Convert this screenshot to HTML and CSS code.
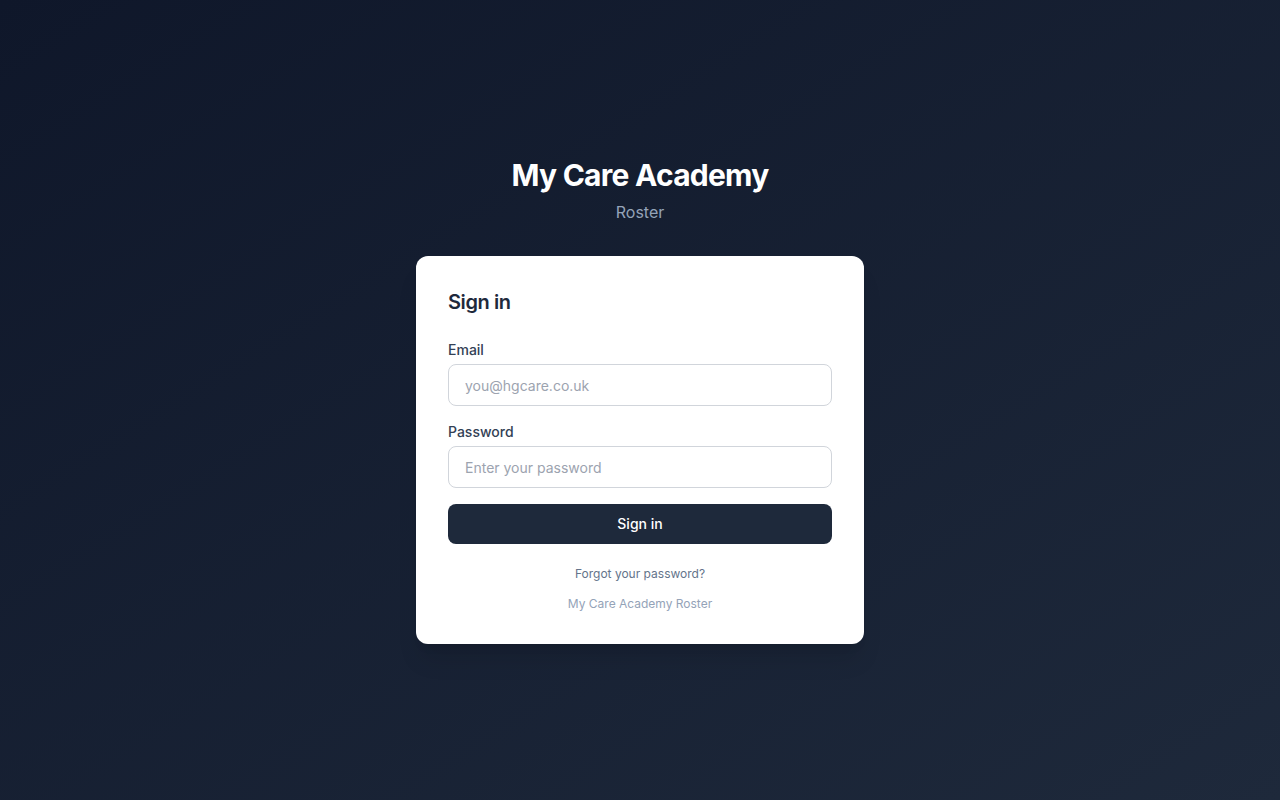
FILE: index.html
```html
<!DOCTYPE html>
<html lang="en">
<head>
<meta charset="utf-8">
<title>My Care Academy Roster - Sign in</title>
<link rel="stylesheet" href="styles.css">
</head>
<body>
<main class="page">
  <div class="wrap">
    <header class="brand">
      <h1 class="brand-title">My Care Academy</h1>
      <p class="brand-sub">Roster</p>
    </header>
    <section class="card">
      <h2 class="card-title">Sign in</h2>
      <form class="form">
        <div class="field">
          <label class="label" for="email">Email</label>
          <input class="input" id="email" type="email" placeholder="you@hgcare.co.uk">
        </div>
        <div class="field">
          <label class="label" for="password">Password</label>
          <input class="input" id="password" type="password" placeholder="Enter your password">
        </div>
        <button class="btn" type="button">Sign in</button>
      </form>
      <div class="forgot"><a class="forgot-link" href="#">Forgot your password?</a></div>
      <p class="footer">My Care Academy Roster</p>
    </section>
  </div>
</main>
</body>
</html>
```
FILE: styles.css
```css
* { box-sizing: border-box; }
html, body { margin: 0; padding: 0; }
body {
  font-family: Inter, "Noto Sans", "Liberation Sans", sans-serif;
  background: linear-gradient(to bottom right, #0f172a, #1e293b);
  min-height: 100vh;
}
.page {
  min-height: 100vh;
  display: flex;
  align-items: center;
  justify-content: center;
  padding: 1px 16px 0;
}
.wrap {
  width: 448px;
}
.brand {
  text-align: center;
  margin-bottom: 32px;
}
.brand-title {
  margin: 0;
  font-size: 30px;
  line-height: 36px;
  font-weight: 700;
  color: #ffffff;
  letter-spacing: -0.75px;
}
.brand-sub {
  margin: 7px 0 0;
  font-size: 16px;
  line-height: 24px;
  color: #94a3b8;
}
.card {
  background: #ffffff;
  border-radius: 12px;
  padding: 32px;
  box-shadow: 0 20px 25px -5px rgba(0,0,0,0.1), 0 8px 10px -6px rgba(0,0,0,0.1);
}
.card-title {
  margin: 0 0 24px;
  font-size: 20px;
  line-height: 28px;
  font-weight: 600;
  color: #1e293b;
  letter-spacing: -0.4px;
}
.form {
  display: flex;
  flex-direction: column;
  gap: 16px;
}
.field {
  display: flex;
  flex-direction: column;
  gap: 4px;
}
.label {
  font-size: 14px;
  line-height: 20px;
  font-weight: 500;
  color: #334155;
}
.input {
  width: 100%;
  height: 42px;
  padding: 10px 16px;
  font-family: inherit;
  font-size: 14px;
  line-height: 20px;
  color: #1e293b;
  border: 1px solid #d1d5db;
  border-radius: 8px;
  background: #fff;
  outline: none;
}
.input::placeholder { color: #9ca3af; }
.btn {
  height: 40px;
  width: 100%;
  border: none;
  border-radius: 8px;
  background: #1e293b;
  color: #ffffff;
  font-family: inherit;
  font-size: 14px;
  line-height: 20px;
  font-weight: 500;
  cursor: pointer;
}
.forgot {
  margin-top: 22px;
  text-align: center;
  font-size: 12px;
  line-height: 16px;
}
.forgot-link {
  color: #64748b;
  text-decoration: none;
}
.footer {
  margin: 14px 0 0;
  text-align: center;
  font-size: 12px;
  line-height: 16px;
  color: #94a3b8;
}
```
